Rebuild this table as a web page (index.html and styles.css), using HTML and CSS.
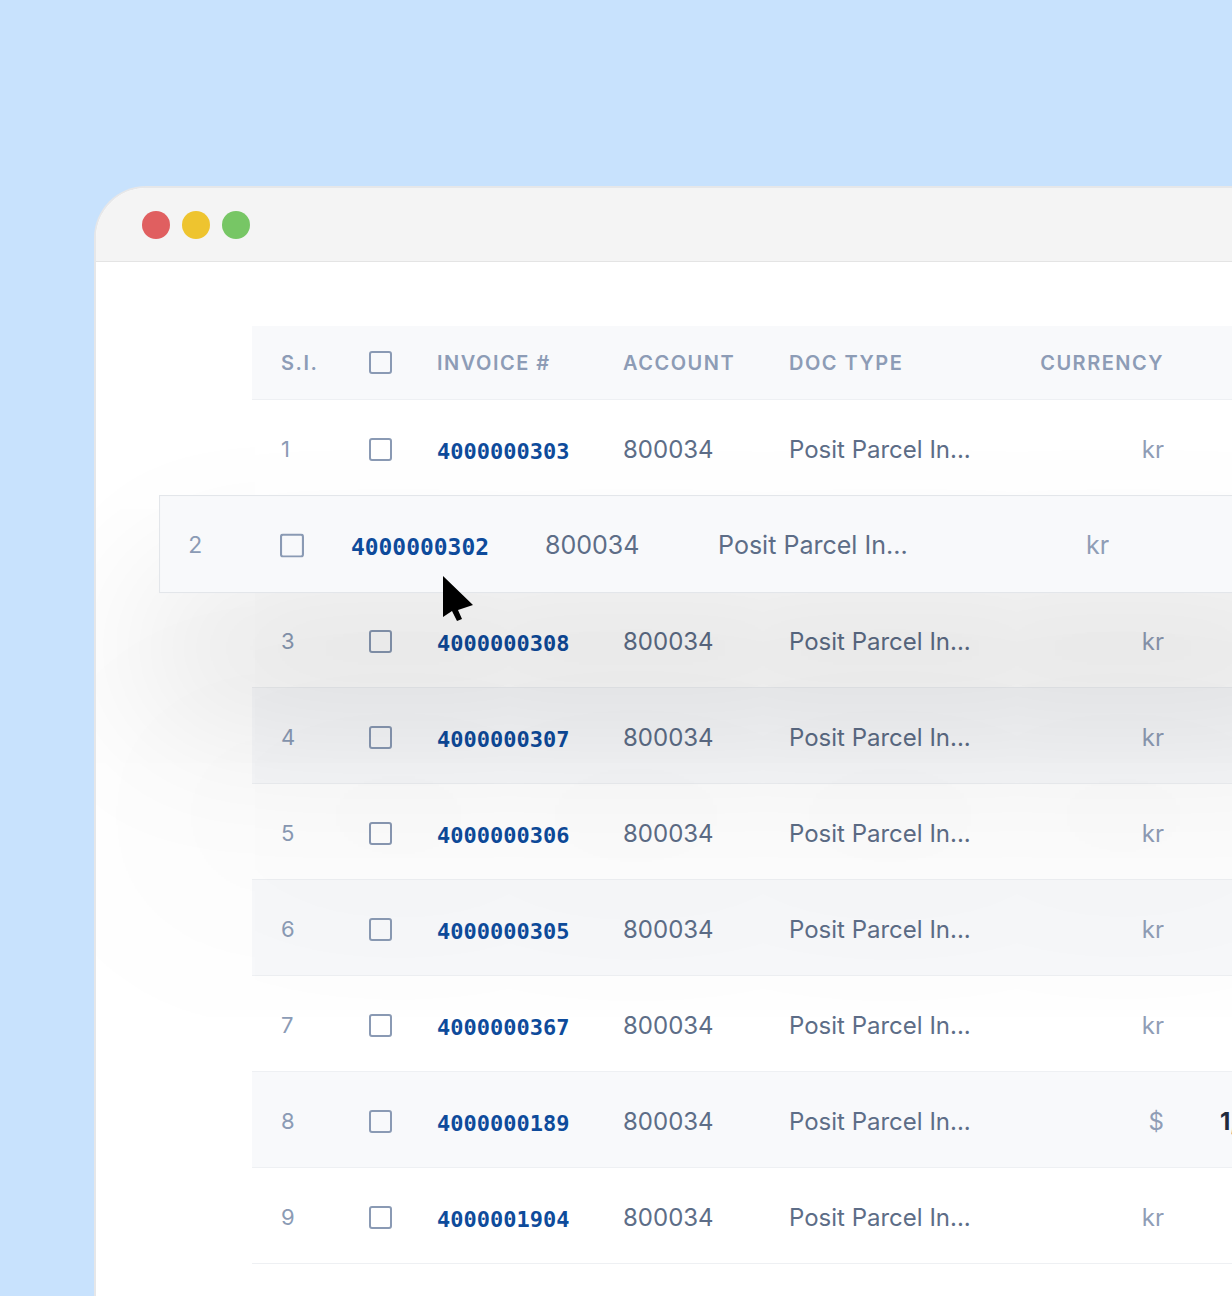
FILE: index.html
```html
<!DOCTYPE html>
<html lang="en">
<head>
<meta charset="utf-8">
<title>Invoices</title>
<link rel="stylesheet" href="styles.css">
</head>
<body>
<div class="stage">
  <div class="window">
    <div class="titlebar">
      <span class="dot dot-red"></span>
      <span class="dot dot-yellow"></span>
      <span class="dot dot-green"></span>
    </div>
    <div class="content">
      <div class="table">
        <div class="row head">
          <div class="cell si">S.I.</div>
          <div class="cell"><span class="check"></span></div>
          <div class="cell">INVOICE #</div>
          <div class="cell">ACCOUNT</div>
          <div class="cell">DOC TYPE</div>
          <div class="cell cur">CURRENCY</div>
          <div class="cell amt"></div>
        </div>
        <div class="row">
          <div class="cell si">1</div>
          <div class="cell"><span class="check"></span></div>
          <div class="cell inv">4000000303</div>
          <div class="cell txt">800034</div>
          <div class="cell txt">Posit Parcel In...</div>
          <div class="cell cur">kr</div>
          <div class="cell amt"></div>
        </div>
        <div class="row stripe slot"></div>
        <div class="row">
          <div class="cell si">3</div>
          <div class="cell"><span class="check"></span></div>
          <div class="cell inv">4000000308</div>
          <div class="cell txt">800034</div>
          <div class="cell txt">Posit Parcel In...</div>
          <div class="cell cur">kr</div>
          <div class="cell amt"></div>
        </div>
        <div class="row stripe">
          <div class="cell si">4</div>
          <div class="cell"><span class="check"></span></div>
          <div class="cell inv">4000000307</div>
          <div class="cell txt">800034</div>
          <div class="cell txt">Posit Parcel In...</div>
          <div class="cell cur">kr</div>
          <div class="cell amt"></div>
        </div>
        <div class="row">
          <div class="cell si">5</div>
          <div class="cell"><span class="check"></span></div>
          <div class="cell inv">4000000306</div>
          <div class="cell txt">800034</div>
          <div class="cell txt">Posit Parcel In...</div>
          <div class="cell cur">kr</div>
          <div class="cell amt"></div>
        </div>
        <div class="row stripe">
          <div class="cell si">6</div>
          <div class="cell"><span class="check"></span></div>
          <div class="cell inv">4000000305</div>
          <div class="cell txt">800034</div>
          <div class="cell txt">Posit Parcel In...</div>
          <div class="cell cur">kr</div>
          <div class="cell amt"></div>
        </div>
        <div class="row">
          <div class="cell si">7</div>
          <div class="cell"><span class="check"></span></div>
          <div class="cell inv">4000000367</div>
          <div class="cell txt">800034</div>
          <div class="cell txt">Posit Parcel In...</div>
          <div class="cell cur">kr</div>
          <div class="cell amt"></div>
        </div>
        <div class="row stripe">
          <div class="cell si">8</div>
          <div class="cell"><span class="check"></span></div>
          <div class="cell inv">4000000189</div>
          <div class="cell txt">800034</div>
          <div class="cell txt">Posit Parcel In...</div>
          <div class="cell cur">$</div>
          <div class="cell amt">1,250.00</div>
        </div>
        <div class="row">
          <div class="cell si">9</div>
          <div class="cell"><span class="check"></span></div>
          <div class="cell inv">4000001904</div>
          <div class="cell txt">800034</div>
          <div class="cell txt">Posit Parcel In...</div>
          <div class="cell cur">kr</div>
          <div class="cell amt"></div>
        </div>

        <div class="row drag">
          <div class="cell si">2</div>
          <div class="cell"><span class="check"></span></div>
          <div class="cell inv">4000000302</div>
          <div class="cell txt">800034</div>
          <div class="cell txt">Posit Parcel In...</div>
          <div class="cell cur">kr</div>
          <div class="cell amt"></div>
        </div>
      </div>
    </div>
  </div>
  <svg class="cursor" width="32" height="48" viewBox="0 0 32 48" aria-hidden="true">
    <path d="M0 0 L0 41 L9 35 L14 45 L19 43 L15 34 L30 29 Z" fill="#000"/>
  </svg>
</div>
</body>
</html>
```

FILE: styles.css
```css
* { box-sizing: border-box; }

html, body {
  margin: 0;
  padding: 0;
}

body {
  width: 1232px;
  height: 1296px;
  overflow: hidden;
  background: #c8e2fd;
  font-family: Inter, "Noto Sans", "Liberation Sans", sans-serif;
}

.stage {
  position: relative;
  padding: 186px 0 0 94px;
}

.window {
  width: 1300px;
  min-height: 1200px;
  background: #ffffff;
  border-top: 2px solid #e6e7e9;
  border-left: 2px solid #e6e7e9;
  border-top-left-radius: 52px;
  overflow: hidden;
}

.titlebar {
  height: 74px;
  background: #f4f4f4;
  border-bottom: 1px solid #e4e4e4;
  display: flex;
  align-items: center;
  gap: 12px;
  padding-left: 46px;
}

.dot {
  width: 28px;
  height: 28px;
  border-radius: 50%;
}
.dot-red { background: #e05f60; }
.dot-yellow { background: #eec42f; }
.dot-green { background: #77c665; }

.content {
  padding: 64px 0 0 156px;
}

.table {
  position: relative;
  width: 1100px;
}

.row {
  display: grid;
  grid-template-columns: 88px 68px 186px 166px 251px 124px 1fr;
  align-items: center;
  height: 96px;
  padding-left: 29px;
  padding-top: 3px;
  background: #ffffff;
  border-bottom: 1px solid #eef0f3;
}

.row.stripe { background: #f8f9fb; }

.row.head {
  height: 74px;
  padding-top: 0;
  background: #f8f9fb;
  color: #8d9cb6;
  font-size: 20px;
  font-weight: 600;
  letter-spacing: 1.5px;
}

.cell {
  white-space: nowrap;
  overflow: hidden;
}

.head .cell { overflow: visible; }

.si {
  font-size: 22px;
  color: #8b9bb5;
}

.head .si { font-size: 20px; color: #8d9cb6; }

.check {
  display: block;
  width: 23px;
  height: 23px;
  border: 2px solid #8a9ab4;
  border-radius: 3px;
}

.head .check { margin-top: 0; }

.inv {
  font-family: "DejaVu Sans Mono", "Liberation Mono", monospace;
  font-weight: 700;
  font-size: 22px;
  color: #0e4b9b;
  padding-top: 4px;
}

.txt {
  font-size: 24px;
  color: #5d6d87;
}

.cur {
  text-align: right;
  font-size: 24px;
  color: #8f9db6;
}

.head .cur { font-size: 20px; color: #8d9cb6; }

.amt {
  padding-left: 56px;
  font-size: 24px;
  font-weight: 700;
  color: #1f2a3c;
}

.drag {
  position: absolute;
  left: -93px;
  top: 169px;
  width: 1150px;
  height: 94px;
  padding-left: 27px;
  padding-top: 2px;
  background: #f8f9fb;
  border: 1px solid #e3e6ea;
  transform: scale(1.043);
  transform-origin: 0 0;
  box-shadow: 0 100px 160px rgba(0, 0, 0, 0.17), 0 260px 420px rgba(0, 0, 0, 0.07);
}

.cursor {
  position: absolute;
  left: 443px;
  top: 576px;
}
```
